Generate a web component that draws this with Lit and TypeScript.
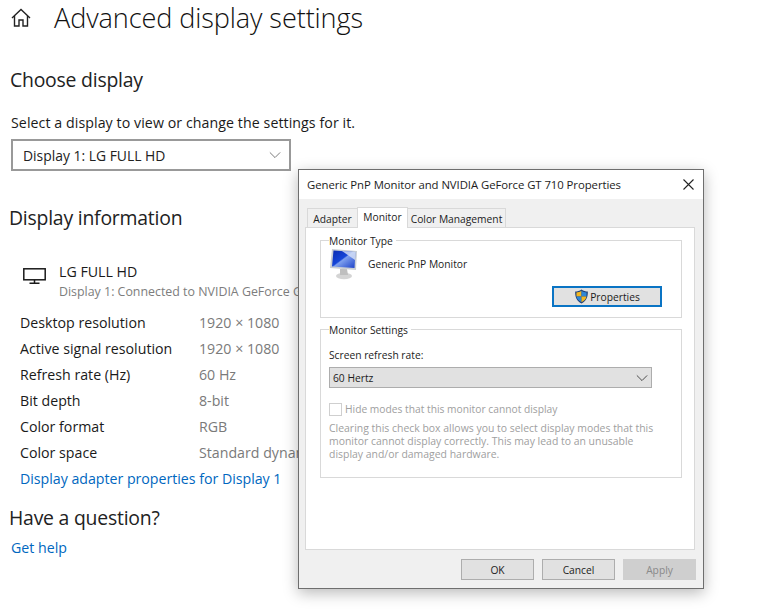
import { LitElement, html, css, svg } from "lit";
import { customElement } from "lit/decorators.js";

const rows = [
  ["Desktop resolution", "1920 × 1080"],
  ["Active signal resolution", "1920 × 1080"],
  ["Refresh rate (Hz)", "60 Hz"],
  ["Bit depth", "8-bit"],
  ["Color format", "RGB"],
  ["Color space", "Standard dynamic"],
];

const chevron = svg`<path d="M1 1.5 L7 7.5 L13 1.5" fill="none" stroke="currentColor" stroke-width="1"/>`;

@customElement("app-root")
export class AppRoot extends LitElement {
  static styles = css`
    :host {
      display: block;
      position: relative;
      width: 758px;
      height: 612px;
      overflow: hidden;
      background: #fff;
      color: #1a1a1a;
      font-family: "Open Sans", "Noto Sans", sans-serif;
    }
    .page { padding: 0 0 0 10px; }
    .head { display: flex; align-items: center; gap: 22px; height: 36px; }
    .head svg { display: block; flex: none; margin-top: -1px; }
    h1 { margin: 0; font-size: 27.1px; font-weight: 300; line-height: 36px; letter-spacing: -0.1px; white-space: nowrap; color: #111; }
    h2 { margin: 0 0 0 -1px; font-size: 19.4px; font-weight: 400; line-height: 26px; letter-spacing: -0.22px; white-space: nowrap; color: #222; }
    .choose { margin-top: 31px; margin-left: 0; }
    .hint { margin: 20px 0 0 1px; font-size: 14.2px; line-height: 20px; letter-spacing: 0.07px; white-space: nowrap; }
    .select {
      box-sizing: border-box; margin: 6px 0 0 1px; width: 280px; height: 32px; border: 2px solid #999;
      display: flex; align-items: center; justify-content: space-between; padding: 0 8px 0 10px;
      font-size: 13.9px; letter-spacing: 0; color: #222;
    }
    .select svg { color: #666; }
    .info { margin-top: 34px; }
    .mon { display: flex; margin: 31px 0 0 13px; gap: 13px; align-items: flex-start; }
    .mon svg { margin-top: 6px; flex: none; }
    .mon .t1 { font-size: 14.2px; line-height: 20px; letter-spacing: 0; }
    .mon .t2 { font-size: 12.4px; line-height: 20px; letter-spacing: 0; color: #7d7d7d; white-space: nowrap; }
    .rows { margin: 7px 0 0 10px; display: grid; grid-template-columns: 179px 1fr; grid-auto-rows: 26px; align-items: center; font-size: 14.2px; letter-spacing: 0; white-space: nowrap; }
    .rows .v { color: #7a7a7a; }
    a { color: #0067c0; text-decoration: none; }
    .adapter { display: block; margin: 1px 0 0 10px; font-size: 14.2px; line-height: 26px; letter-spacing: -0.02px; }
    .q { margin-top: 13px; }
    .help { display: block; margin: 7px 0 0 1px; font-size: 14.2px; line-height: 20px; letter-spacing: 0; }

    .dlg {
      position: absolute; left: 298px; top: 169px; width: 406px; height: 420px; box-sizing: border-box;
      border: 1px solid #6e6e6e; background: #f0f0f0;
      box-shadow: 0 4px 14px rgba(0,0,0,.28);
      display: flex; flex-direction: column; font-size: 10.25px; color: #1c1c1c; letter-spacing: 0; white-space: nowrap;
    }
    .tbar { box-sizing: border-box; height: 29px; flex: none; background: #fff; display: flex; align-items: center; justify-content: space-between; padding: 0 9px 1px 8px; font-size: 11.35px; letter-spacing: -0.06px; }
    .tbar svg { display: block; color: #222; }
    .tabs { display: flex; align-items: flex-end; height: 28px; padding-left: 8px; flex: none; }
    .tab { box-sizing: border-box; height: 19px; padding-top: 1px; border: 1px solid #d9d9d9; border-bottom: 0; margin-right: -1px; background: #f0f0f0; display: flex; align-items: center; justify-content: center; }
    .w51 { width: 51px; }
    .w99 { width: 99px; }
    .tab.on { height: 21px; padding: 0 0 3px; background: #fff; position: relative; z-index: 1; margin-bottom: -1px; border-color: #d9d9d9; }
    .panel { margin: 0 8px 0 6px; flex: 0 0 323px; box-sizing: border-box; background: #fff; border: 1px solid #d9d9d9; padding: 5px 12px 0 14px; }
    fieldset { margin: 0; padding: 0 8px; border: 1px solid #d9d9d9; box-sizing: border-box; min-width: 0; }
    legend { padding: 0 3px 0 0; margin-left: 0; line-height: 14px; transform: translateY(1px); }
    .type { height: 85px; margin-bottom: 4px; position: relative; }
    .type .mrow { display: flex; align-items: center; gap: 9px; height: 32px; margin-top: 1px; }
    .type .mrow svg { display: block; flex: none; }
    .btnrow { display: flex; justify-content: flex-end; margin: 6px 11px 0 0; }
    .prop { box-sizing: border-box; width: 110px; height: 21px; border: 2px solid #0a74c4; background: #e1e1e1; display: flex; align-items: center; justify-content: center; gap: 1px; }
    .prop svg { display: block; }
    .settings { height: 156px; }
    .lab { margin-top: 12px; line-height: 15px; }
    .combo { box-sizing: border-box; width: 323px; height: 21px; margin-top: 4px; background: #e1e1e1; border: 1px solid #adadad; display: flex; align-items: center; justify-content: space-between; padding: 0 3px 0 3px; }
    .combo svg { color: #333; }
    .dis { color: #a0a0a0; }
    .chk { display: flex; align-items: center; gap: 3px; margin-top: 14px; height: 14px; }
    .box { width: 11px; height: 11px; border: 1px solid #cfcfcf; flex: none; }
    .para { margin: 6px 0 0; line-height: 13px; font-size: 10.45px; }
    .foot { flex: 1; display: flex; justify-content: flex-end; gap: 8px; padding: 9px 7px 0 0; }
    .b { box-sizing: border-box; width: 73px; height: 21px; background: #e1e1e1; border: 1px solid #adadad; display: flex; align-items: center; justify-content: center; }
    .b.off { background: #cfcfcf; border-color: #cfcfcf; color: #8a8a8a; }
  `;

  render() {
    return html`
      <div class="page">
        <div class="head">
          <svg width="22" height="22" viewBox="0 0 22 22" fill="none" stroke="#222" stroke-width="1.4">
            <path d="M2 11 L11 2.5 L20 11"/><path d="M4.5 9 V19 H9 V13 H13 V19 H17.5 V9"/>
          </svg>
          <h1>Advanced display settings</h1>
        </div>
        <h2 class="choose">Choose display</h2>
        <p class="hint">Select a display to view or change the settings for it.</p>
        <div class="select"><span>Display 1: LG FULL HD</span><svg width="12" height="8" viewBox="0 0 14 9">${chevron}</svg></div>
        <h2 class="info">Display information</h2>
        <div class="mon">
          <svg width="23" height="16" viewBox="0 0 23 16" fill="none" stroke="#1a1a1a" stroke-width="1.5">
            <rect x=".8" y=".8" width="21.4" height="11"/><path d="M11.5 12 V15 M6.5 15.2 H16.5"/>
          </svg>
          <div>
            <div class="t1">LG FULL HD</div>
            <div class="t2">Display 1: Connected to NVIDIA GeForce GT 710</div>
          </div>
        </div>
        <div class="rows">
          ${rows.map((r) => html`<span>${r[0]}</span><span class="v">${r[1]}</span>`)}
        </div>
        <a class="adapter">Display adapter properties for Display 1</a>
        <h2 class="q">Have a question?</h2>
        <a class="help">Get help</a>
      </div>

      <div class="dlg">
        <div class="tbar">
          <span>Generic PnP Monitor and NVIDIA GeForce GT 710 Properties</span>
          <svg width="11" height="11" viewBox="0 0 11 11" stroke="currentColor" stroke-width="1.1"><path d="M.5 .5 L10.5 10.5 M10.5 .5 L.5 10.5"/></svg>
        </div>
        <div class="tabs">
          <div class="tab w51">Adapter</div>
          <div class="tab on w51">Monitor</div>
          <div class="tab w99">Color Management</div>
        </div>
        <div class="panel">
          <fieldset class="type">
            <legend>Monitor Type</legend>
            <div class="mrow">
              <svg width="30" height="32" viewBox="0 0 30 32">
                <defs>
                  <linearGradient id="scr" x1="0" y1="0" x2="1" y2="1">
                    <stop offset="0" stop-color="#0b2bb0"/><stop offset=".45" stop-color="#1646d8"/>
                    <stop offset=".5" stop-color="#7ea0ee"/><stop offset="1" stop-color="#1a3fc8"/>
                  </linearGradient>
                </defs>
                <ellipse cx="15" cy="28" rx="8" ry="3.2" fill="#d4d4d4"/>
                <path d="M11 21 H18 L19 27 H11 Z" fill="#bfbfbf"/>
                <path d="M3 1 L28 3 L27 22 L1 20 Z" fill="#c9ced3"/>
                <path d="M4.5 2.5 L26.5 4 L25.5 20 L3 18.5 Z" fill="url(#scr)"/>
                <path d="M13 3 L26.5 4 L26 12 Z" fill="#d3def6" opacity=".85"/>
              </svg>
              <span>Generic PnP Monitor</span>
            </div>
            <div class="btnrow">
              <div class="prop">
                <svg width="15" height="15" viewBox="0 0 15 15">
                  <path d="M7.5 .5 C5.5 2 3.5 2.5 1.2 2.6 C1 8 2.5 12 7.5 14.6 C12.5 12 14 8 13.8 2.6 C11.5 2.5 9.5 2 7.5 .5 Z" fill="#1c3f78"/>
                  <path d="M7.5 1.8 C6 2.9 4.2 3.4 2.4 3.5 L2.5 7.5 H7.5 Z" fill="#f3b61f"/>
                  <path d="M7.5 1.8 C9 2.9 10.8 3.4 12.6 3.5 L12.5 7.5 H7.5 Z" fill="#2f86d6"/>
                  <path d="M2.5 7.5 H7.5 V13.2 C4.5 11.6 3 10 2.5 7.5 Z" fill="#2f86d6"/>
                  <path d="M12.5 7.5 H7.5 V13.2 C10.5 11.6 12 10 12.5 7.5 Z" fill="#f3b61f"/>
                </svg>
                <span>Properties</span>
              </div>
            </div>
          </fieldset>
          <fieldset class="settings">
            <legend>Monitor Settings</legend>
            <div class="lab">Screen refresh rate:</div>
            <div class="combo"><span>60 Hertz</span><svg width="12" height="8" viewBox="0 0 14 9">${chevron}</svg></div>
            <div class="chk dis"><div class="box"></div><span>Hide modes that this monitor cannot display</span></div>
            <p class="para dis">Clearing this check box allows you to select display modes that this<br>monitor cannot display correctly. This may lead to an unusable<br>display and/or damaged hardware.</p>
          </fieldset>
        </div>
        <div class="foot">
          <div class="b">OK</div><div class="b">Cancel</div><div class="b off">Apply</div>
        </div>
      </div>
    `;
  }
}
